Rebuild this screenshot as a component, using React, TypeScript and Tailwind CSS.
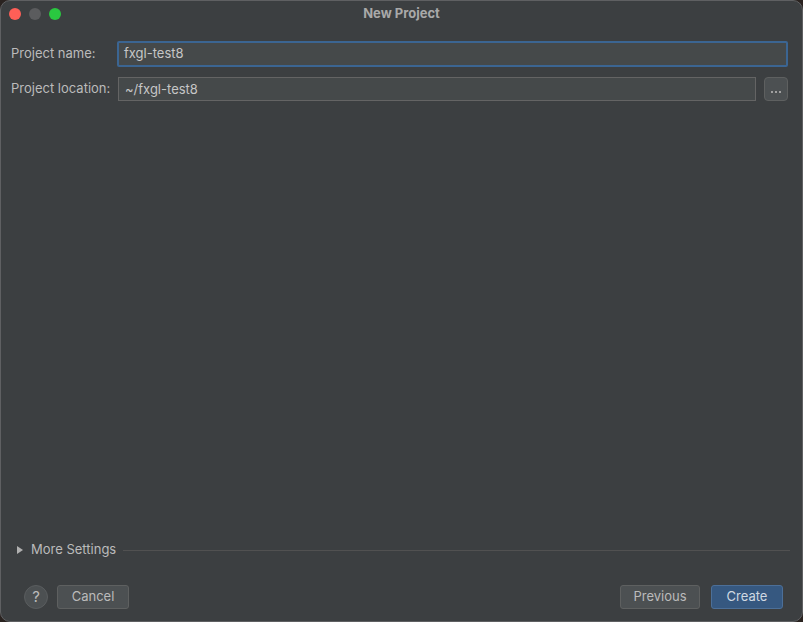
export default function App() {
  return (
    <div className="w-[803px] h-[622px] bg-[#2a2320] overflow-hidden" style={{ fontFamily: 'Inter, "Liberation Sans", sans-serif' }}>
      <div className="w-[803px] h-[622px] rounded-[10px] border border-[#5f6062] bg-[#3c3f41] flex flex-col text-[13px] text-[#bbbbbb]">
        {/* Title bar */}
        <div className="h-[26px] flex items-center relative shrink-0">
          <div className="flex gap-[8px] pl-[8px]">
            <span className="w-[12px] h-[12px] rounded-full bg-[#fe5f57]" />
            <span className="w-[12px] h-[12px] rounded-full bg-[#5b5c5e]" />
            <span className="w-[12px] h-[12px] rounded-full bg-[#2ac840]" />
          </div>
          <div className="absolute inset-0 flex items-center justify-center font-bold text-[13px] text-[#a9a9a9] pointer-events-none">
            New Project
          </div>
        </div>

        {/* Form */}
        <div className="flex flex-col gap-[10px] pl-[10px] pr-[14px] pt-[14px]">
          <div className="flex items-center">
            <div className="w-[106px] shrink-0">Project name:</div>
            <div className="flex-1 h-[26px] border-2 border-[#3b6592] rounded-[2px] bg-[#45494a] flex items-center px-[5px] text-[#c6c6c6]">
              fxgl-test8
            </div>
          </div>
          <div className="flex items-center">
            <div className="w-[107px] shrink-0">Project location:</div>
            <div className="flex-1 h-[24px] border border-[#646464] bg-[#45494a] flex items-center px-[6px] pt-px text-[#c6c6c6]">
              ~/fxgl-test8
            </div>
            <div className="ml-[8px] w-[24px] h-[24px] rounded-[4px] border border-[#5e6060] bg-[#4c5052] flex items-end justify-center gap-[2px] pb-[7px]">
              <span className="w-[2px] h-[2px] bg-[#a0a0a0]" />
              <span className="w-[2px] h-[2px] bg-[#a0a0a0]" />
              <span className="w-[2px] h-[2px] bg-[#a0a0a0]" />
            </div>
          </div>
        </div>

        <div className="flex-1" />

        {/* More settings */}
        <div className="flex items-center pl-[16px] pr-[12px] h-[18px]">
          <svg width="6" height="8" viewBox="0 0 6 8" className="mr-[8px]">
            <path d="M0 0 L6 4 L0 8 Z" fill="#b0b0b0" />
          </svg>
          <span>More Settings</span>
          <div className="flex-1 h-px bg-[#515151] ml-[7px]" />
        </div>

        {/* Footer */}
        <div className="flex items-center pl-[23px] pr-[19px] pt-[26px] pb-[12px]">
          <div className="w-[24px] h-[24px] rounded-full bg-[#4c5052] border border-[#5a5d5f] flex items-center justify-center text-[15px] text-[#bbbbbb]">
            ?
          </div>
          <button className="ml-[9px] w-[72px] h-[24px] rounded-[3px] border border-[#5e6060] bg-[#4c5052] text-[#bbbbbb]">
            Cancel
          </button>
          <div className="flex-1" />
          <button className="w-[80px] h-[24px] rounded-[3px] border border-[#5e6060] bg-[#4c5052] text-[#bbbbbb]">
            Previous
          </button>
          <button className="ml-[11px] w-[72px] h-[24px] rounded-[3px] border border-[#4c6f98] bg-[#365880] text-[#d0d8e2]">
            Create
          </button>
        </div>
      </div>
    </div>
  );
}
